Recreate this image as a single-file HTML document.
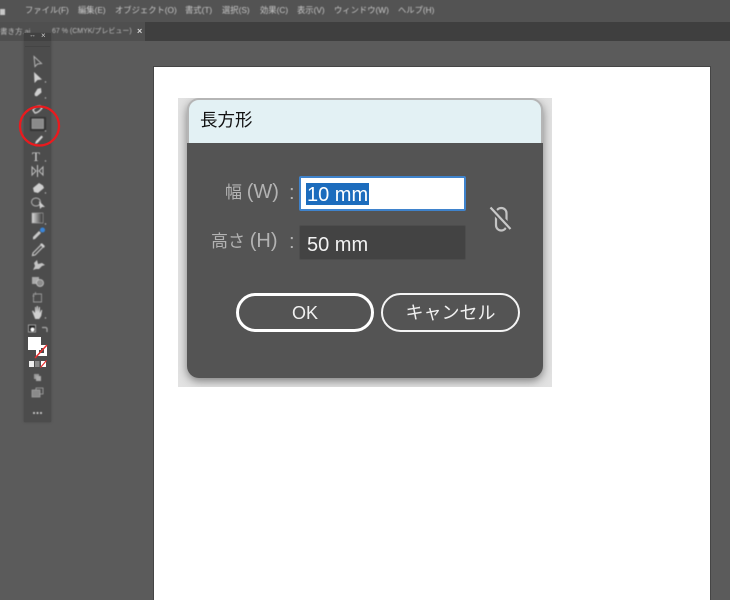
<!DOCTYPE html>
<html lang="ja">
<head>
<meta charset="utf-8">
<style>
html,body{margin:0;padding:0;width:730px;height:600px;overflow:hidden;background:#5b5b5b}
body{position:relative;font-family:"Liberation Sans","Noto Sans CJK JP",sans-serif}
.a{position:absolute;white-space:nowrap}
.m{top:0;height:21px;line-height:21px;font-size:8.3px;color:#c8c8c8;filter:blur(.4px)}
.l{font-size:17px;line-height:22px;color:#b3b3b3}
.l b{font-weight:normal;font-size:20px}
svg{position:absolute;overflow:visible}
</style>
</head>
<body>
<div class="a" style="left:0;top:0;width:730px;height:22px;background:#535353"></div>
<div class="a" style="left:0;top:22px;width:730px;height:19px;background:#3f3f3f"></div>
<div class="a" style="left:0;top:22px;width:145px;height:19px;background:#4f4f4f"></div>
<div class="a" style="left:0;top:9px;width:5px;height:6px;background:#c8c8c8;filter:blur(.4px)"></div>

<span class="a m" style="left:25px">ファイル(F)</span>
<span class="a m" style="left:78px">編集(E)</span>
<span class="a m" style="left:115px">オブジェクト(O)</span>
<span class="a m" style="left:185px">書式(T)</span>
<span class="a m" style="left:222px">選択(S)</span>
<span class="a m" style="left:260px">効果(C)</span>
<span class="a m" style="left:297px">表示(V)</span>
<span class="a m" style="left:334px">ウィンドウ(W)</span>
<span class="a m" style="left:398px">ヘルプ(H)</span>
<span class="a" style="left:0;top:22px;line-height:19px;font-size:7.500px;color:#bdbdbd;filter:blur(.4px)">書き方.ai</span>
<span class="a" style="left:52px;top:22px;line-height:19px;font-size:7px;color:#bdbdbd;filter:blur(.4px)">67 % (CMYK/プレビュー)</span>
<span class="a" style="left:137px;top:22px;line-height:19px;font-size:9px;font-weight:bold;color:#d5d5d5">×</span>

<!-- artboard -->
<div class="a" style="left:153px;top:66px;width:558px;height:534px;background:#454545"></div>
<div class="a" style="left:154px;top:67px;width:556px;height:533px;background:#fff"></div>

<!-- toolbar -->
<div class="a" style="left:24px;top:33px;width:27px;height:389px;background:#4c4c4c;box-shadow:0 0 2px #444"></div>
<div class="a" style="left:24px;top:33px;width:27px;height:8px;background:#414141"></div>
<span class="a" style="left:29px;top:31px;font-size:7px;line-height:10px;color:#bbb">↔</span>
<span class="a" style="left:41px;top:31px;font-size:8px;line-height:10px;color:#ccc">×</span>
<div class="a" style="left:25px;top:46px;width:25px;height:1px;background:#444"></div>

<svg style="left:0;top:0;filter:blur(.45px)" width="730" height="600" viewBox="0 0 730 600">
  <!-- selection -->
  <path d="M34 56.500l1 10 2.500-2.500 4-.5z" fill="none" stroke="#b5b5b5" stroke-width="1"/>
  <!-- direct selection -->
  <path d="M34 72l.5 11 3-3 4.500-.5z" fill="#d0d0d0"/>
  <circle cx="45.500" cy="82" r=".7" fill="#bbb"/>
  <!-- pen -->
  <path d="M41 88l-3.500.8-3 5 .5 2.200 2 .2 4.500-3.700z" fill="#cfcfcf"/>
  <circle cx="45.500" cy="98" r=".7" fill="#bbb"/>
  <!-- curvature -->
  <path d="M33 110c2-3 4-4 7-4l2 2c-2 3-5 5-7 5z" fill="none" stroke="#cbcbcb" stroke-width="1.500"/>
  <!-- rectangle tool -->
  <rect x="30" y="117" width="16" height="14" fill="#343434"/>
  <rect x="32" y="119" width="11.500" height="9.500" fill="#8a8a8a" stroke="#a5a5a5" stroke-width=".7"/>
  <circle cx="45.500" cy="131" r=".7" fill="#bbb"/>
  <!-- brush -->
  <path d="M41.500 135.500l1.500 1.500-5.500 6-2.500 1 1-3z" fill="#d8d8d8"/>
  <!-- type -->
  <text x="32" y="161" font-family="Liberation Serif,serif" font-size="13" fill="#dadada">T</text>
  <circle cx="45.500" cy="161" r=".7" fill="#bbb"/>
  <!-- mirror -->
  <path d="M32 167l4 4-4 4zM43 167l-4 4 4 4z" fill="none" stroke="#bdbdbd" stroke-width="1"/>
  <path d="M37.500 165v12" stroke="#ccc" stroke-width="1"/>
  <!-- eraser -->
  <path d="M33 188l6-5 4 2.500 1 2.500-6 5-4-1z" fill="#cfcfcf"/>
  <circle cx="45.500" cy="193" r=".7" fill="#bbb"/>
  <!-- shape builder -->
  <ellipse cx="36" cy="202" rx="4.500" ry="4" fill="none" stroke="#b5b5b5"/>
  <path d="M39 201l1 8 2-2 3 0z" fill="#d0d0d0"/>
  <!-- gradient -->
  <defs><linearGradient id="g"><stop offset="0" stop-color="#ddd"/><stop offset="1" stop-color="#333"/></linearGradient></defs>
  <rect x="32" y="213" width="11" height="10" fill="url(#g)" stroke="#aaa" stroke-width=".6"/>
  <circle cx="45.500" cy="224" r=".7" fill="#bbb"/>
  <!-- blend -->
  <path d="M33 237l6-6 2 2-6 6-2 .5z" fill="#cbcbcb"/>
  <circle cx="42.500" cy="230" r="2.500" fill="#3a85d8"/>
  <!-- eyedropper -->
  <path d="M41 245l2 2-8 8-2.500.5.500-2.500z" fill="none" stroke="#c5c5c5" stroke-width="1.200"/>
  <path d="M40 244l4 4 .8-2-2.800-2.800z" fill="#d0d0d0"/>
  <!-- live paint -->
  <path d="M33 270l2-4-1-3 3-3 1 4 4-1 3 2-3 1-3 3-3 0z" fill="#c5c5c5"/>
  <!-- shapes -->
  <rect x="32" y="277" width="7" height="7" fill="#aaa"/>
  <circle cx="40" cy="283" r="3.500" fill="#8c8c8c" stroke="#ccc" stroke-width=".8"/>
  <!-- artboard tool -->
  <path d="M33 294h8.500v8h-8v-8M35.500 292v3M32.500 296h2" fill="none" stroke="#999" stroke-width=".9"/>
  <!-- hand -->
  <path d="M34 316l-2-5 1-.5 2 2.500v-6h1v5l.8-6h1.100v6l1-5h1v6l1.300-3h1l-1 6-2 3h-4z" fill="#d0d0d0"/>
  <circle cx="45.500" cy="318" r=".7" fill="#bbb"/>
  <!-- default colours -->
  <rect x="28.500" y="325" width="7" height="7" fill="#222" stroke="#bbb" stroke-width=".8"/>
  <circle cx="32.500" cy="329.500" r="2" fill="#fff"/>
  <path d="M42 327.500h3.500a1.500 1.500 0 0 1 1.500 1.500v3" fill="none" stroke="#aaa" stroke-width="1.200"/>
  <!-- draw -->
  <rect x="34" y="374" width="5" height="5" fill="#999"/>
  <rect x="36" y="376" width="5" height="5" fill="#aaa"/>
  <!-- screen -->
  <rect x="32" y="390" width="8" height="7" fill="#8a8a8a" stroke="#aaa" stroke-width=".7"/>
  <path d="M36 390v-2h7v6h-3" fill="none" stroke="#aaa" stroke-width=".8"/>
  <!-- dots -->
  <circle cx="34" cy="413" r="1" fill="#ddd"/><circle cx="37.500" cy="413" r="1" fill="#ddd"/><circle cx="41" cy="413" r="1" fill="#ddd"/>
</svg>
<svg style="left:0;top:0" width="730" height="600" viewBox="0 0 730 600">
  <!-- fill + stroke -->
  <rect x="36" y="345" width="11" height="11" fill="#fff"/>
  <rect x="39" y="348" width="5" height="5" fill="#4c4c4c"/>
  <path d="M35 358l12-13" stroke="#e82e2e" stroke-width="1.500"/>
  <rect x="28" y="337" width="13" height="13" fill="#fff"/>
  <!-- mode buttons -->
  <rect x="29" y="361" width="5" height="6" fill="#eee"/>
  <rect x="35" y="361" width="4.500" height="6" fill="#888"/>
  <rect x="41" y="361" width="5" height="6" fill="#fff"/>
  <path d="M40.500 367.500l6-7" stroke="#e82e2e" stroke-width="1.200"/>
  <!-- red circle -->
  <circle cx="39.500" cy="126" r="19.500" fill="none" stroke="#ea1a1e" stroke-width="2.300"/>
</svg>

<!-- dialog screenshot backdrop -->
<div class="a" style="left:178px;top:98px;width:374px;height:289px;background:#e2e2e2;overflow:hidden">
  <div class="a" style="left:9px;top:1px;width:356px;height:279px;border-radius:12px;background:#545454;overflow:hidden;box-shadow:0 3px 9px rgba(60,60,60,.6)">
    <div class="a" style="left:0;top:0;width:356px;height:44px;background:#e3f1f4"></div>
  </div>
  <div class="a" style="left:9px;top:0;width:356px;height:45px;overflow:hidden">
    <div class="a" style="left:0;top:0;width:356px;height:200px;box-sizing:border-box;border:2px solid #b5b5b5;border-radius:12px"></div>
  </div>
</div>
<span class="a" style="left:200px;top:110px;font-size:17.500px;line-height:21px;color:#111">長方形</span>

<span class="a l" style="left:225px;top:181px">幅 <b>(W)</b></span>
<span class="a l" style="left:289px;top:182px"><b>:</b></span>
<span class="a l" style="left:211px;top:230px">高さ <b>(H)</b></span>
<span class="a l" style="left:289px;top:231px"><b>:</b></span>

<div class="a" style="left:299px;top:176px;width:167px;height:35px;box-sizing:border-box;background:#fff;border:2px solid #3f83cc;border-radius:2px"></div>
<div class="a" style="left:306px;top:183px;width:63px;height:22px;background:#1c6cbd"></div>
<span class="a" style="left:307px;top:184px;font-size:20px;line-height:23px;color:#fff">10 mm</span>

<div class="a" style="left:299px;top:225px;width:167px;height:35px;box-sizing:border-box;background:#434343;border:1px solid #4d4d4d;border-radius:2px"></div>
<span class="a" style="left:307px;top:234px;font-size:20px;line-height:23px;color:#f2f2f2">50 mm</span>

<svg style="left:0;top:0" width="730" height="600" viewBox="0 0 730 600">
  <rect x="496" y="208" width="10.500" height="22.500" rx="5.200" fill="none" stroke="#c4c4c4" stroke-width="2.200"/>
  <path d="M490 207l21 22" stroke="#545454" stroke-width="6"/>
  <path d="M490.500 207.500l20 21.500" stroke="#c8c8c8" stroke-width="2.200"/>
</svg>

<div class="a" style="left:236px;top:293px;width:138px;height:39px;box-sizing:border-box;border:3px solid #fff;border-radius:19.500px;text-align:center;font-size:18px;line-height:35px;color:#f0f0f0">OK</div>
<div class="a" style="left:381px;top:293px;width:139px;height:39px;box-sizing:border-box;border:2px solid #f4f4f4;border-radius:19.500px;text-align:center;font-size:18px;line-height:37px;color:#f0f0f0">キャンセル</div>
</body>
</html>
